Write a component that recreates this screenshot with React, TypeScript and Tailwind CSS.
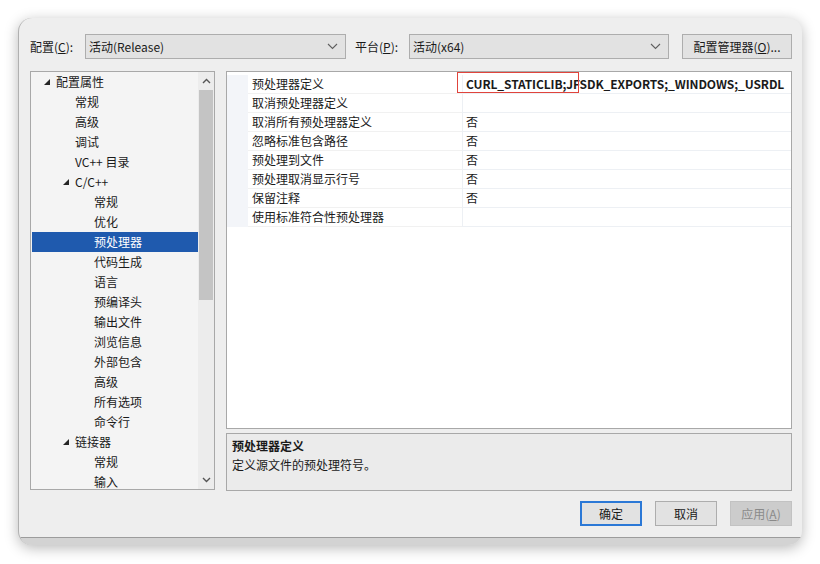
const FONT = { fontFamily: '"Noto Sans CJK SC", "Noto Sans", sans-serif' };

type Node = { label: string; level: number; open?: boolean; selected?: boolean };

const tree: Node[] = [
  { label: "配置属性", level: 0, open: true },
  { label: "常规", level: 1 },
  { label: "高级", level: 1 },
  { label: "调试", level: 1 },
  { label: "VC++ 目录", level: 1 },
  { label: "C/C++", level: 1, open: true },
  { label: "常规", level: 2 },
  { label: "优化", level: 2 },
  { label: "预处理器", level: 2, selected: true },
  { label: "代码生成", level: 2 },
  { label: "语言", level: 2 },
  { label: "预编译头", level: 2 },
  { label: "输出文件", level: 2 },
  { label: "浏览信息", level: 2 },
  { label: "外部包含", level: 2 },
  { label: "高级", level: 2 },
  { label: "所有选项", level: 2 },
  { label: "命令行", level: 2 },
  { label: "链接器", level: 1, open: true },
  { label: "常规", level: 2 },
  { label: "输入", level: 2 },
];

const props: [string, string][] = [
  ["预处理器定义", "CURL_STATICLIB;JFSDK_EXPORTS;_WINDOWS;_USRDL"],
  ["取消预处理器定义", ""],
  ["取消所有预处理器定义", "否"],
  ["忽略标准包含路径", "否"],
  ["预处理到文件", "否"],
  ["预处理取消显示行号", "否"],
  ["保留注释", "否"],
  ["使用标准符合性预处理器", ""],
];

function Chevron({ up = false }: { up?: boolean }) {
  return (
    <svg width="9" height="6" viewBox="0 0 9 6" className={up ? "rotate-180" : ""}>
      <path d="M1 1l3.5 3.5L8 1" fill="none" stroke="#555" strokeWidth="1.4" />
    </svg>
  );
}

function Combo({ value, width }: { value: string; width: string }) {
  return (
    <div className={`${width} h-[25px] flex items-center justify-between bg-[#e2e2e2] border border-[#adadad] pl-[3px] pr-[7px]`}>
      <span>{value}</span>
      <svg width="11" height="7" viewBox="0 0 11 7">
        <path d="M1 1l4.5 4.5L10 1" fill="none" stroke="#606060" strokeWidth="1.1" />
      </svg>
    </div>
  );
}

function Arrow() {
  return (
    <svg width="6" height="6" viewBox="0 0 6 6">
      <polygon points="6,0 6,6 0,6" fill="#262626" />
    </svg>
  );
}

export default function App() {
  return (
    <div className="w-[820px] h-[564px] bg-white pl-[18px] pt-[18px] text-[12px] text-[#1a1a1a]" style={FONT}>
      <div className="w-[784px] h-[527px] rounded-[14px] overflow-hidden flex flex-col bg-[#eeeeee] border-l border-[#b0b0b0] shadow-[0_3px_14px_rgba(0,0,0,0.28)]">
        <div className="flex-1 flex flex-col pl-[11px] pt-[16px]">
          {/* top row */}
          <div className="flex items-center h-[25px]">
            <span className="w-[55px]">配置(<u>C</u>):</span>
            <Combo value="活动(Release)" width="w-[261px]" />
            <span className="ml-[9px] w-[54px]">平台(<u>P</u>):</span>
            <Combo value="活动(x64)" width="w-[260px]" />
            <button className="ml-[13px] w-[110px] h-[25px] bg-[#e2e2e2] border border-[#adadad]">
              配置管理器(<u>O</u>)...
            </button>
          </div>

          <div className="flex mt-[12px]">
            {/* tree */}
            <div className="w-[185px] h-[419px] border border-[#a8a8a8] bg-[#f4f4f4] flex overflow-hidden">
              <div className="flex-1 pl-[1px]">
                {tree.map((n, i) => (
                  <div
                    key={i}
                    className={`h-[20px] flex items-center ${n.selected ? "bg-[#1f5aae] text-white" : ""}`}
                    style={{ paddingLeft: 12 + n.level * 19 }}
                  >
                    <span className="w-[12px] flex items-center">{n.open && <Arrow />}</span>
                    <span>{n.label}</span>
                  </div>
                ))}
              </div>
              <div className="w-[16px] flex flex-col bg-[#ececec]">
                <div className="h-[18px] flex items-center justify-center">
                  <Chevron up />
                </div>
                <div className="h-[210px] mx-[1px] bg-[#c4c4c4]" />
                <div className="flex-1" />
                <div className="h-[18px] flex items-center justify-center">
                  <Chevron />
                </div>
              </div>
            </div>

            {/* right column */}
            <div className="ml-[11px] w-[566px] flex flex-col">
              <div className="relative h-[358px] border border-[#a8a8a8] bg-white pt-[3px]">
                {props.map(([k, v], i) => (
                  <div key={i} className="flex h-[19px] items-center">
                    <div className="w-[21px] h-full bg-[#f3f5f9]" />
                    <div className="w-[214px] h-full flex items-center pl-[4px] border-b border-[#f1f1f1]">{k}</div>
                    <div
                      className={`flex-1 h-full flex items-center pl-[3px] border-l border-b border-[#edf0f4] overflow-hidden whitespace-nowrap ${i === 0 ? "font-bold tracking-[-0.1px]" : ""}`}
                    >
                      {v}
                    </div>
                  </div>
                ))}
                <div className="absolute left-[230px] top-[0px] w-[122px] h-[21px] border-[1.5px] border-[#e0443c]" />
              </div>
              <div className="mt-[4px] h-[58px] border border-[#a8a8a8] bg-[#ebebeb] pl-[5px] pt-[2px] leading-[19px]">
                <div className="font-bold">预处理器定义</div>
                <div>定义源文件的预处理符号。</div>
              </div>
            </div>
          </div>

          <div className="flex justify-end gap-[13px] mt-[10px] pr-[10px]">
            <button className="w-[62px] h-[25px] bg-[#e2e2e2] border-2 border-[#2b78d6]">确定</button>
            <button className="w-[62px] h-[25px] bg-[#e2e2e2] border border-[#adadad]">取消</button>
            <button className="w-[62px] h-[25px] bg-[#cccccc] border border-[#c2c2c2] text-[#8a8a8a]">
              应用(<u>A</u>)
            </button>
          </div>
        </div>
        <div className="h-[8px] bg-[#d3d3d3] border-t border-[#9c9c9c]" />
      </div>
    </div>
  );
}
